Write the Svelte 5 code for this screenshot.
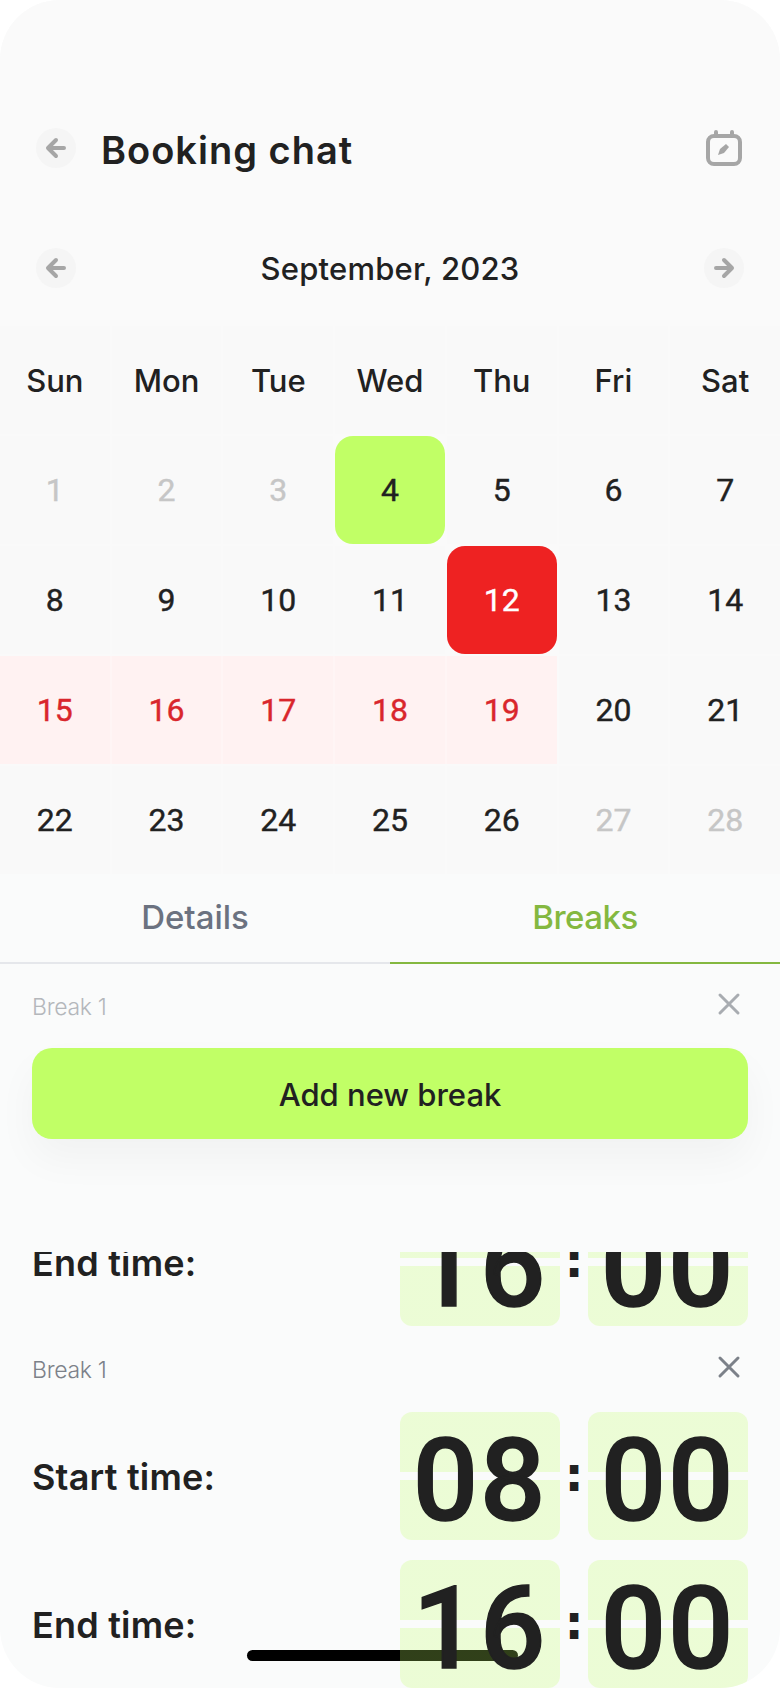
<script lang="ts">
  const weekdays = ['Sun', 'Mon', 'Tue', 'Wed', 'Thu', 'Fri', 'Sat'];
  const muted = [1, 2, 3, 27, 28];
  const blocked = [15, 16, 17, 18, 19];
  const days = Array.from({ length: 28 }, (_, i) => i + 1);

  function dayClass(d: number) {
    if (d === 4) return 'selected';
    if (d === 12) return 'today';
    if (blocked.includes(d)) return 'blocked';
    if (muted.includes(d)) return 'muted';
    return '';
  }
</script>

{#snippet arrow(flip = false)}
  <button class="round" aria-label="arrow">
    <svg width="24" height="24" viewBox="0 0 24 24" class:flip>
      <path d="M20 12H5M12 4l-8 8 8 8" fill="none" stroke="#a6a6a6" stroke-width="4" stroke-linecap="round" stroke-linejoin="round" />
    </svg>
  </button>
{/snippet}

{#snippet cross(color)}
  <svg class="cross" width="24" height="24" viewBox="0 0 24 24">
    <path d="M3 3l18 18M21 3L3 21" fill="none" stroke={color} stroke-width="3" stroke-linecap="round" />
  </svg>
{/snippet}

{#snippet timeRow(label, hh, mm)}
  <div class="time-row">
    <span class="time-label">{label}</span>
    <div class="clock">
      <div class="slot">{hh}</div>
      <span class="colon">:</span>
      <div class="slot">{mm}</div>
    </div>
  </div>
{/snippet}

<div class="screen">
  <header class="top">
    {@render arrow()}
    <h1>Booking chat</h1>
    <svg class="cal-icon" width="38" height="38" viewBox="0 0 38 38">
      <rect x="3" y="7" width="32" height="28" rx="6" fill="none" stroke="#a6a6a6" stroke-width="4" />
      <path d="M11 3v4M27 3v4" stroke="#a6a6a6" stroke-width="4" stroke-linecap="round" />
      <path d="M13 26l2-6 6-5 3 3-5 6z" fill="#a6a6a6" />
    </svg>
  </header>

  <div class="month">
    {@render arrow()}
    <span>September, 2023</span>
    {@render arrow(true)}
  </div>

  <div class="calendar">
    {#each weekdays as w}
      <div class="cell head">{w}</div>
    {/each}
    {#each days as d}
      <div class="cell day {dayClass(d)}">{d}</div>
    {/each}
  </div>

  <div class="tabs">
    <div class="tab">Details</div>
    <div class="tab active">Breaks</div>
  </div>

  <div class="break-head first">
    <span>Break 1</span>
    {@render cross('#a8acb1')}
  </div>

  <div class="add-wrap">
    <button class="add">Add new break</button>
  </div>

  <div class="list">
    <div class="list-inner">
      {@render timeRow('End time:', '16', '00')}
      <div class="break-head">
        <span>Break 1</span>
        {@render cross('#7c8189')}
      </div>
      {@render timeRow('Start time:', '08', '00')}
      {@render timeRow('End time:', '16', '00')}
    </div>
  </div>

  <div class="home-bar"></div>
</div>

<style>
  :global(body) {
    background: #fff;
  }

  .screen {
    position: relative;
    width: 780px;
    height: 1688px;
    overflow: hidden;
    border-radius: 60px;
    background: #fafbfb;
    color: #212121;
    font-family: Inter, "Liberation Sans", sans-serif;
  }

  .top,
  .month {
    display: flex;
    align-items: center;
    padding-left: 36px;
    padding-right: 36px;
    box-sizing: border-box;
    background: #fafafa;
  }

  .top {
    height: 208px;
    padding-top: 128px;
    padding-bottom: 40px;
  }

  h1 {
    margin: 3px 0 0 25px;
    flex: 1;
    font-size: 38px;
    font-weight: 600;
    letter-spacing: 1px;
  }

  .cal-icon {
    margin-right: 1px;
  }

  .month {
    justify-content: space-between;
    height: 118px;
    padding-top: 40px;
    padding-bottom: 38px;
    font-size: 31px;
    font-weight: 500;
    letter-spacing: 0.2px;
  }

  .round {
    display: flex;
    align-items: center;
    justify-content: center;
    flex: none;
    width: 40px;
    height: 40px;
    padding: 0;
    border: 0;
    border-radius: 50%;
    background: #f5f5f5;
  }

  .flip {
    transform: scaleX(-1);
  }

  .calendar {
    display: grid;
    grid-template-columns: repeat(7, 1fr);
    grid-auto-rows: 108px;
    gap: 2px;
    background: #fafafa;
  }

  .cell {
    display: flex;
    align-items: center;
    justify-content: center;
    background: #f9f9f9;
    font-size: 31px;
  }

  .head {
    font-weight: 500;
  }

  .day {
    font-family: Roboto, sans-serif;
    font-size: 32px;
    font-weight: 400;
    -webkit-text-stroke: 0.4px currentColor;
  }

  .muted {
    color: #c6c6c6;
  }

  .blocked {
    background: #fff2f2;
    color: #d9262c;
  }

  .blocked:has(+ .blocked) {
    box-shadow: 2px 0 0 #fff5f5;
  }

  .selected {
    background: #c1ff66;
    border-radius: 18px;
  }

  .today {
    background: #ee2222;
    border-radius: 18px;
    color: #fff;
  }

  .tabs {
    display: grid;
    grid-template-columns: 1fr 1fr;
    margin-top: 1px;
  }

  .tab {
    height: 87px;
    line-height: 84px;
    text-align: center;
    font-size: 33px;
    font-weight: 500;
    color: #6b7280;
    border-bottom: 2px solid #e5e7eb;
  }

  .tab.active {
    color: #84b840;
    border-color: #84b840;
    letter-spacing: -0.5px;
  }

  .break-head {
    display: flex;
    align-items: center;
    justify-content: space-between;
    padding: 0 39px 0 32px;
    font-size: 23px;
    font-weight: 300;
    letter-spacing: -0.3px;
    color: #7c8189;
  }

  .break-head span {
    margin-top: 2px;
  }

  .cross {
    margin-top: -5px;
  }

  .break-head.first {
    height: 84px;
    color: #b4b7bb;
  }

  .add-wrap {
    padding: 0 32px;
    height: 204px;
  }

  .add {
    display: block;
    width: 100%;
    height: 91px;
    padding: 2px 0 0;
    border: 0;
    border-radius: 20px;
    background: #c1ff66;
    box-shadow: 0 20px 40px rgba(0, 0, 0, 0.04);
    color: #212121;
    font-family: inherit;
    font-size: 31px;
    font-weight: 500;
  }

  .list {
    position: relative;
    z-index: 1;
    height: 436px;
    overflow: hidden;
  }

  .list-inner {
    display: flex;
    flex-direction: column;
    gap: 20px;
    margin-top: -54px;
  }

  .list-inner .break-head {
    height: 86px;
    margin: -20px 0;
  }

  .time-row {
    display: flex;
    align-items: center;
    justify-content: space-between;
    padding: 0 32px;
  }

  .time-label {
    margin-top: 2px;
    font-size: 36px;
    font-weight: 600;
    letter-spacing: 0.2px;
  }

  .clock {
    display: flex;
    align-items: center;
  }

  .slot {
    width: 160px;
    height: 128px;
    padding-top: 10px;
    box-sizing: border-box;
    border-radius: 12px;
    background: linear-gradient(
      rgba(193, 255, 102, 0.25) 60px,
      transparent 60px 68px,
      rgba(193, 255, 102, 0.25) 68px
    );
    text-align: center;
    font-family: Roboto, sans-serif;
    font-size: 115px;
    font-weight: 500;
    -webkit-text-stroke: 1.5px currentColor;
    letter-spacing: 2px;
    line-height: 118px;
    color: #212121;
  }

  .colon {
    width: 28px;
    margin-top: -5px;
    text-align: center;
    font-family: "DejaVu Sans", sans-serif;
    font-size: 48px;
    font-weight: 700;
    line-height: 1;
  }

  .home-bar {
    position: absolute;
    left: 247px;
    top: 1650px;
    width: 271px;
    height: 11px;
    border-radius: 6px;
    background: #000;
  }
</style>
